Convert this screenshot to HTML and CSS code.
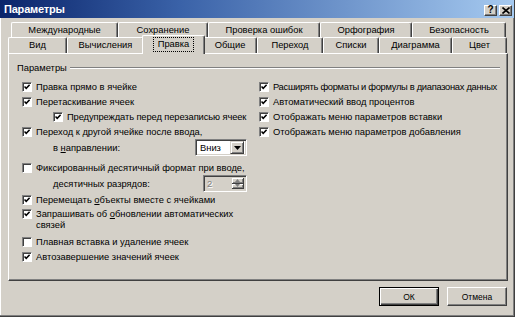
FILE: index.html
```html
<!DOCTYPE html>
<html lang="ru">
<head>
<meta charset="utf-8">
<title>Параметры</title>
<link rel="stylesheet" href="styles.css">
</head>
<body>
<div class="win">
  <div class="titlebar">
    <span class="title">Параметры</span>
    <div class="tbtns">
      <span class="tbtn help">?</span>
      <span class="tbtn close">
        <svg width="8" height="7" viewBox="0 0 8 7"><path d="M0.5 0.5L7.5 6.5M7.5 0.5L0.5 6.5" stroke="#000" stroke-width="1.6"/></svg>
      </span>
    </div>
  </div>

  <div class="tabs">
    <div class="tabrow back">
      <div class="tab w107">Международные</div>
      <div class="tab w90">Сохранение</div>
      <div class="tab w112">Проверка ошибок</div>
      <div class="tab w92">Орфография</div>
      <div class="tab w94">Безопасность</div>
    </div>
    <div class="tabrow front">
      <div class="tab w59">Вид</div>
      <div class="tab w77">Вычисления</div>
      <div class="tab w59 sel"><span class="focus">Правка</span></div>
      <div class="tab w54">Общие</div>
      <div class="tab w66">Переход</div>
      <div class="tab w56">Списки</div>
      <div class="tab w73">Диаграмма</div>
      <div class="tab w55">Цвет</div>
    </div>
  </div>

  <div class="panel">
    <div class="group">
      <span class="glabel">Параметры</span>
      <span class="gline"></span>
    </div>
    <div class="cols">
      <div class="col left">
        <div class="row"><span class="cb on"></span><span class="lbl">Правка прямо в ячейке</span></div>
        <div class="row"><span class="cb on"></span><span class="lbl">Перетаскивание ячеек</span></div>
        <div class="row indent"><span class="cb on"></span><span class="lbl tight">Предупреждать перед перезаписью ячеек</span></div>
        <div class="row"><span class="cb on"></span><span class="lbl">Переход к другой ячейке после ввода,</span></div>
        <div class="row ctl">
          <span class="sublbl">в <u>н</u>аправлении:</span>
          <span class="select"><span class="seltext">Вниз</span><span class="dd"><svg width="7" height="4" viewBox="0 0 7 4"><path d="M0 0H7L3.5 4Z" fill="#000"/></svg></span></span>
        </div>
        <div class="row gap"><span class="cb"></span><span class="lbl">Фиксированный десятичный формат при вводе,</span></div>
        <div class="row ctl">
          <span class="sublbl"><u>д</u>есятичных разрядов:</span>
          <span class="spin"><span class="spintext">2</span><span class="spbtns"><span class="spb"><svg width="5" height="3" viewBox="0 0 5 3"><path d="M2.5 0L5 3H0Z" fill="#808080"/></svg></span><span class="spb"><svg width="5" height="3" viewBox="0 0 5 3"><path d="M0 0H5L2.5 3Z" fill="#808080"/></svg></span></span></span>
        </div>
        <div class="row"><span class="cb on"></span><span class="lbl">Перемещать <u>о</u>бъекты вместе с ячейками</span></div>
        <div class="row two"><span class="cb on"></span><span class="lbl">Запрашивать об <u>о</u>бновлении автоматических<br>связей</span></div>
        <div class="row"><span class="cb"></span><span class="lbl">Плавная вставка и удаление ячеек</span></div>
        <div class="row"><span class="cb on"></span><span class="lbl">Автозавершение значений ячеек</span></div>
      </div>
      <div class="col right">
        <div class="row"><span class="cb on"></span><span class="lbl tighter">Расширять форматы и формулы в диапазонах данных</span></div>
        <div class="row"><span class="cb on"></span><span class="lbl">Автоматический ввод процентов</span></div>
        <div class="row"><span class="cb on"></span><span class="lbl">Отображать меню параметров вставки</span></div>
        <div class="row"><span class="cb on"></span><span class="lbl">Отображать меню параметров добавления</span></div>
      </div>
    </div>
  </div>

  <div class="buttons">
    <span class="btn def">ОК</span>
    <span class="btn">Отмена</span>
  </div>
</div>
</body>
</html>
```

FILE: styles.css
```css
html, body {
  margin: 0;
  padding: 0;
  overflow: hidden;
  background: #D4D0C8;
}
.win {
  width: 515px;
  height: 317px;
  box-sizing: border-box;
  background: #D4D0C8;
  border-bottom: 1px solid #404040;
  border-right: 1px solid #404040;
  box-shadow: inset -1px -1px #808080, inset 1px 0 #ffffff;
  display: flex;
  flex-direction: column;
  font-family: "Liberation Sans", Arial, sans-serif;
  font-size: 9.35px;
  color: #000;
}
.titlebar {
  height: 18px;
  flex: none;
  display: flex;
  align-items: center;
  justify-content: space-between;
  background: linear-gradient(to right, #0A246A 0%, #3a62a8 35%, #A6CAF0 100%);
  padding: 0 2px 0 4px;
}
.title {
  color: #fff;
  font-weight: bold;
  font-size: 11px;
  letter-spacing: -0.2px;
}
.tbtns {
  display: flex;
  gap: 2px;
  margin-top: 2px;
}
.tbtn {
  width: 13px;
  height: 11px;
  box-sizing: border-box;
  background: #D4D0C8;
  border-top: 1px solid #fff;
  border-left: 1px solid #fff;
  border-right: 1px solid #404040;
  border-bottom: 1px solid #404040;
  box-shadow: inset -1px -1px #808080;
  display: flex;
  align-items: center;
  justify-content: center;
  font-weight: bold;
  font-size: 10px;
  line-height: 1;
}
.tabs {
  margin-top: 4px;
  height: 31px;
  flex: none;
  display: flex;
  flex-direction: column;
}
.tabrow {
  display: flex;
}
.tabrow.back {
  margin-left: 11px;
  height: 15px;
}
.tabrow.front {
  margin-left: 8px;
  height: 16px;
  position: relative;
  z-index: 1;
}
.tab {
  box-sizing: border-box;
  background: #D4D0C8;
  border-top: 1px solid #fff;
  border-left: 1px solid #fff;
  border-right: 1px solid #404040;
  box-shadow: inset -1px 0 #808080;
  border-radius: 2px 2px 0 0;
  text-align: center;
  line-height: 15px;
  white-space: nowrap;
}
.back .tab {
  height: 17px;
  line-height: 14px;
}
.front .tab {
  height: 16px;
}
.tab.sel {
  height: 19px;
  margin: -2px -2px 0 -2px;
  width: 63px;
  line-height: 17px;
  position: relative;
  z-index: 2;
}
.focus {
  display: inline-block;
  outline: 1px dotted #000;
  outline-offset: 0;
  line-height: 13px;
  padding: 0 4px;
  margin-top: 1px;
}
.w107 { width: 107px; }
.w90 { width: 90px; }
.w112 { width: 112px; }
.w92 { width: 92px; }
.w94 { width: 94px; }
.w59 { width: 59px; }
.w77 { width: 77px; }
.w54 { width: 54px; }
.w66 { width: 66px; }
.w56 { width: 56px; }
.w73 { width: 73px; }
.w55 { width: 55px; }

.panel {
  margin-left: 8px;
  width: 500px;
  height: 228px;
  flex: none;
  box-sizing: border-box;
  border-top: 1px solid #fff;
  border-left: 1px solid #fff;
  border-right: 1px solid #404040;
  border-bottom: 1px solid #404040;
  box-shadow: inset -1px -1px #808080;
  padding: 8px 0 0 0;
}
.group {
  display: flex;
  align-items: center;
  height: 12px;
  padding-left: 8px;
  padding-right: 7px;
}
.glabel {
  padding-right: 3px;
}
.gline {
  flex: 1;
  height: 0;
  border-top: 1px solid #808080;
  border-bottom: 1px solid #fff;
}
.cols {
  display: flex;
  margin-top: 5px;
}
.col.left {
  width: 250px;
  flex: none;
  padding-left: 13px;
  box-sizing: border-box;
}
.col.right {
  flex: 1;
}
.row {
  display: flex;
  align-items: center;
  height: 15px;
  white-space: nowrap;
}
.row.indent {
  padding-left: 31px;
}
.row.ctl {
  height: 17px;
  justify-content: space-between;
  padding-right: 12px;
}
.row.gap {
  margin-top: 4px;
}
.row.two {
  align-items: flex-start;
  height: 27px;
  padding-top: 2px;
  box-sizing: border-box;
}
.row.two .lbl {
  line-height: 11px;
}
.tight {
  letter-spacing: -0.1px;
}
.tighter {
  letter-spacing: -0.3px;
}
.sublbl {
  padding-left: 31px;
}
.cb {
  width: 10px;
  height: 10px;
  flex: none;
  box-sizing: border-box;
  background: #fff;
  border-top: 1px solid #808080;
  border-left: 1px solid #808080;
  border-bottom: 1px solid #fff;
  border-right: 1px solid #fff;
  box-shadow: inset 1px 1px #404040;
  margin-right: 4px;
  position: relative;
}
.cb.on::after {
  content: "";
  position: absolute;
  left: 1px;
  top: 1px;
  width: 6px;
  height: 6px;
  background: url("data:image/svg+xml;utf8,<svg xmlns='http://www.w3.org/2000/svg' width='6' height='6' viewBox='0 0 6 6'><path d='M0.5 2.5L2.2 4.3L5.6 0.8' fill='none' stroke='black' stroke-width='1.5'/></svg>") no-repeat;
}
.select {
  width: 52px;
  height: 17px;
  box-sizing: border-box;
  background: #fff;
  border-top: 1px solid #808080;
  border-left: 1px solid #808080;
  border-bottom: 1px solid #fff;
  border-right: 1px solid #fff;
  box-shadow: inset 1px 1px #404040, inset -1px -1px #D4D0C8;
  display: flex;
  align-items: center;
  padding: 2px;
}
.seltext {
  flex: 1;
  padding-left: 2px;
}
.dd {
  width: 14px;
  height: 13px;
  box-sizing: border-box;
  background: #D4D0C8;
  border-top: 1px solid #D4D0C8;
  border-left: 1px solid #D4D0C8;
  border-right: 1px solid #404040;
  border-bottom: 1px solid #404040;
  box-shadow: inset 1px 1px #fff, inset -1px -1px #808080;
  display: flex;
  align-items: center;
  justify-content: center;
}
.spin {
  width: 44px;
  height: 17px;
  box-sizing: border-box;
  background: #D4D0C8;
  border-top: 1px solid #808080;
  border-left: 1px solid #808080;
  border-bottom: 1px solid #fff;
  border-right: 1px solid #fff;
  box-shadow: inset 1px 1px #404040, inset -1px -1px #D4D0C8;
  display: flex;
  align-items: stretch;
  padding: 2px;
}
.spintext {
  flex: 1;
  color: #808080;
  padding-left: 1px;
  line-height: 13px;
  text-shadow: 1px 1px #fff;
}
.spbtns {
  width: 12px;
  display: flex;
  flex-direction: column;
}
.spb {
  flex: 1;
  box-sizing: border-box;
  background: #D4D0C8;
  border-right: 1px solid #404040;
  border-bottom: 1px solid #404040;
  box-shadow: inset 1px 1px #fff, inset -1px -1px #808080;
  display: flex;
  align-items: center;
  justify-content: center;
}
.buttons {
  margin-top: 6px;
  display: flex;
  justify-content: flex-end;
  gap: 8px;
  padding-right: 7px;
}
.btn {
  width: 60px;
  height: 19px;
  box-sizing: border-box;
  background: #D4D0C8;
  border-top: 1px solid #fff;
  border-left: 1px solid #fff;
  border-right: 1px solid #404040;
  border-bottom: 1px solid #404040;
  box-shadow: inset -1px -1px #808080;
  display: flex;
  align-items: center;
  justify-content: center;
  font-size: 8.5px;
}
.btn.def {
  border: 1px solid #000;
  box-shadow: inset 1px 1px #fff, inset -1px -1px #404040, inset -2px -2px #808080;
}
u {
  text-decoration: underline;
  text-underline-offset: 1px;
}
```
